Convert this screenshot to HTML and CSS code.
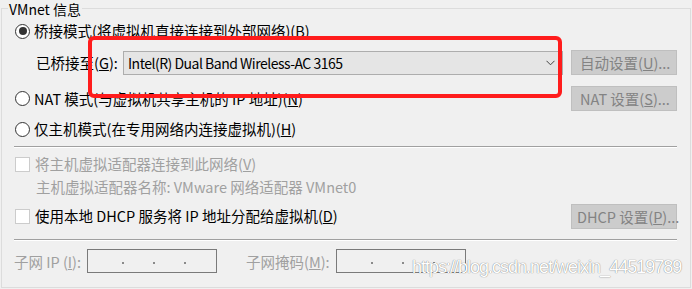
FILE: index.html
```html
<!DOCTYPE html>
<html lang="zh-CN">
<head>
<meta charset="utf-8">
<link rel="stylesheet" href="styles.css">
</head>
<body>
<fieldset class="group">
  <legend class="legend">VMnet 信息</legend>
  <div class="content">
    <div class="row r1">
      <span class="radio checked"></span>
      <span class="label">桥接模式(将虚拟机直接连接到外部网络)(<u>B</u>)</span>
    </div>
    <div class="row r2">
      <span class="bridge-label">已桥接至(<u>G</u>):</span>
      <div class="combo">
        <span class="combo-text">Intel(R) Dual Band Wireless-AC 3165</span>
        <svg class="chev" width="9" height="6" viewBox="0 0 9 6"><path d="M0.5 0.8 L4.5 4.8 L8.5 0.8" fill="none" stroke="#444" stroke-width="1"/></svg>
      </div>
      <button class="btn">自动设置(<u>U</u>)...</button>
    </div>
    <div class="row r3">
      <span class="radio"></span>
      <span class="label">NAT 模式(与虚拟机共享主机的 IP 地址)(<u>N</u>)</span>
      <button class="btn">NAT 设置(<u>S</u>)...</button>
    </div>
    <div class="row r4">
      <span class="radio"></span>
      <span class="label">仅主机模式(在专用网络内连接虚拟机)(<u>H</u>)</span>
    </div>
    <div class="sep s1"></div>
    <div class="row c1">
      <span class="check"></span>
      <span class="label dis">将主机虚拟适配器连接到此网络(<u>V</u>)</span>
    </div>
    <div class="row info dis">主机虚拟适配器名称: VMware 网络适配器 VMnet0</div>
    <div class="row c2">
      <span class="check"></span>
      <span class="label">使用本地 DHCP 服务将 IP 地址分配给虚拟机(<u>D</u>)</span>
      <button class="btn">DHCP 设置(<u>P</u>)...</button>
    </div>
    <div class="sep s2"></div>
    <div class="row bottom dis">
      <span class="ip-label">子网 IP (<u>I</u>):</span>
      <div class="ipbox"><i></i><i></i><i></i></div>
      <span class="mask-label">子网掩码(<u>M</u>):</span>
      <div class="ipbox"><i></i><i></i><i></i></div>
    </div>
  </div>
</fieldset>
<div class="annot"></div>
<div class="watermark">https://blog.csdn.net/weixin_44519789</div>
</body>
</html>
```
FILE: styles.css
```css
html, body {
  margin: 0;
  padding: 0;
}
body {
  width: 692px;
  height: 289px;
  background: #f0f0f0;
  font-family: "Noto Sans CJK SC", "Noto Sans", sans-serif;
  font-size: 14.5px;
  color: #000;
  position: relative;
  overflow: hidden;
}
.group {
  box-sizing: border-box;
  margin: 0 0 0 1px;
  padding: 0;
  width: 690px;
  height: 288px;
  border: 1px solid #dcdcdc;
  min-inline-size: 0;
}
.legend {
  margin-left: 6px;
  padding: 0 1px;
  line-height: 18px;
  height: 16px;
  font-size: 14px;
  margin-top: -1px;
}
.content {
  padding: 0 13px;
}
.row {
  display: flex;
  align-items: center;
  white-space: nowrap;
}
.r1 { margin-top: 5px; height: 20px; }
.r2 { margin-top: 9px; height: 26px; align-items: flex-start; }
.r3 { margin-top: 10px; height: 25px; }
.r4 { margin-top: 8px; height: 20px; }
.c1 { margin-top: 6px; height: 20px; }
.info { margin-top: 2px; height: 20px; padding-left: 21px; }
.c2 { margin-top: 7px; height: 26px; }
.bottom { margin-top: 8px; height: 24px; margin-left: -1px; }

.radio {
  box-sizing: border-box;
  width: 15px;
  height: 15px;
  border: 1px solid #333;
  border-radius: 50%;
  background: #fff;
  flex-shrink: 0;
  margin-right: 4px;
  display: flex;
  align-items: center;
  justify-content: center;
}
.radio.checked::after {
  content: "";
  width: 8px;
  height: 8px;
  border-radius: 50%;
  background: #333;
}
.check {
  box-sizing: border-box;
  width: 15px;
  height: 15px;
  border: 1px solid #cccccc;
  background: #fff;
  flex-shrink: 0;
  margin-right: 5px;
}
.label { line-height: 20px; }
.dis { color: #a0a0a0; }

.bridge-label {
  margin-left: 21px;
  width: 87px;
  flex-shrink: 0;
  line-height: 26px;
}
.combo {
  box-sizing: border-box;
  margin-top: 1px;
  width: 440px;
  height: 24px;
  border: 1px solid #adadad;
  background: #e5e5e5;
  display: flex;
  align-items: center;
  justify-content: space-between;
  padding: 0 7px 0 4px;
}
.combo-text {
  font-size: 14px;
  letter-spacing: -0.5px;
}
.chev { display: block; }

.btn {
  box-sizing: border-box;
  margin-left: auto;
  width: 106px;
  height: 25px;
  border: 1px solid #bfbfbf;
  background: #cccccc;
  color: #838383;
  font-family: inherit;
  font-size: 14.5px;
  text-align: left;
  padding: 0 0 0 8px;
  line-height: 23px;
}
.c2 .btn { margin-top: 1px; align-self: flex-start; padding-left: 5px; }

.sep {
  margin-left: -1px;
  height: 1px;
  background: #a0a0a0;
  border-bottom: 1px solid #ffffff;
}
.s1 { margin-top: 7px; }
.s2 { margin-top: 10px; }

.ip-label { width: 73px; flex-shrink: 0; }
.mask-label { width: 90px; flex-shrink: 0; margin-left: 29px; }
.ipbox {
  box-sizing: border-box;
  width: 130px;
  height: 24px;
  border: 1px solid #7a7a7a;
  display: flex;
  align-items: center;
  padding: 4px 0 0 34px;
  gap: 29px;
}
.ipbox i {
  display: block;
  width: 2px;
  height: 2px;
  background: #8a8a8a;
}

.annot {
  position: absolute;
  left: 88px;
  top: 36px;
  width: 474px;
  height: 62px;
  box-sizing: border-box;
  border: 4px solid #ff1c1c;
  border-radius: 6px;
}
.watermark {
  position: absolute;
  left: 412px;
  top: 257px;
  font-family: "Liberation Sans", Arial, sans-serif;
  font-size: 18px;
  letter-spacing: -1px;
  color: #ffffff;
  text-shadow: 0 0 1px rgba(0, 0, 0, 0.45), 0 0 1px rgba(0, 0, 0, 0.25);
  white-space: nowrap;
}
```
